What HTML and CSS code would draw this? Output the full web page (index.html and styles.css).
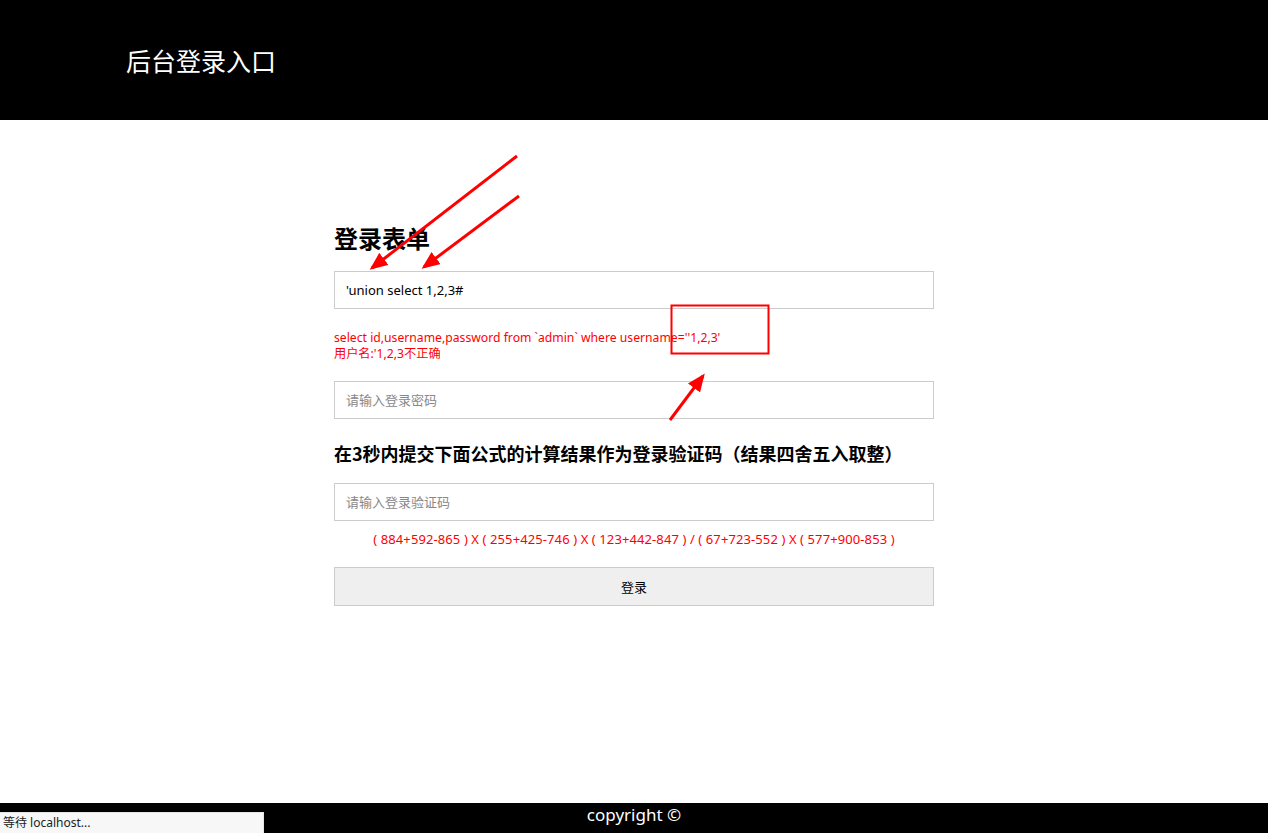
FILE: index.html
```html
<!DOCTYPE html>
<html lang="zh-CN">
<head>
<meta charset="utf-8">
<title>后台登录入口</title>
<link rel="stylesheet" href="styles.css">
</head>
<body>
<div class="page">
  <header class="top">
    <h1 class="brand">后台登录入口</h1>
  </header>
  <main class="main">
    <form class="login">
      <h2 class="form-title">登录表单</h2>
      <input class="field" type="text" value="'union select 1,2,3#">
      <div class="error">
        <div>select id,username,password from `admin` where username=''1,2,3'</div>
        <div>用户名:'1,2,3不正确</div>
      </div>
      <input class="field" type="password" placeholder="请输入登录密码">
      <h3 class="captcha-title">在3秒内提交下面公式的计算结果作为登录验证码（结果四舍五入取整）</h3>
      <input class="field" type="text" placeholder="请输入登录验证码">
      <div class="formula">( 884+592-865 ) X ( 255+425-746 ) X ( 123+442-847 ) / ( 67+723-552 ) X ( 577+900-853 )</div>
      <button class="submit" type="button">登录</button>
    </form>
  </main>
  <footer class="bottom">copyright ©</footer>
</div>
<svg class="annot" width="1268" height="833" viewBox="0 0 1268 833">
  <defs>
    <marker id="ah" markerWidth="6" markerHeight="5" refX="5" refY="2.5" orient="auto" markerUnits="strokeWidth">
      <path d="M0,0 L6,2.5 L0,5 Z" fill="#ff0000"/>
    </marker>
  </defs>
  <line x1="517" y1="156" x2="372" y2="268" stroke="#ff0000" stroke-width="3" marker-end="url(#ah)"/>
  <line x1="519" y1="196" x2="424" y2="267" stroke="#ff0000" stroke-width="3" marker-end="url(#ah)"/>
  <line x1="670" y1="420" x2="703" y2="376" stroke="#ff0000" stroke-width="3" marker-end="url(#ah)"/>
  <rect x="671.5" y="305.5" width="97" height="48" fill="none" stroke="#ff0000" stroke-width="2"/>
</svg>
<div class="status">等待 localhost...</div>
</body>
</html>
```
FILE: styles.css
```css
html, body {
  margin: 0;
  padding: 0;
}
body {
  font-family: "Noto Sans", "Noto Sans CJK SC", sans-serif;
  color: #000;
  background: #fff;
}
.page {
  min-height: 100vh;
  display: flex;
  flex-direction: column;
}
.top {
  background: #000;
  height: 120px;
  display: flex;
  align-items: center;
  padding-left: 126px;
  box-sizing: border-box;
}
.brand {
  margin: 0;
  color: #fff;
  font-weight: normal;
  font-size: 25px;
  font-family: "Noto Sans CJK SC", sans-serif;
  line-height: 1;
  padding-top: 1px;
}
.main {
  flex: 1;
}
.login {
  width: 600px;
  margin: 0 auto;
  padding-top: 101px;
  display: flex;
  flex-direction: column;
}
.form-title {
  margin: 0 0 16px;
  font-size: 24px;
  line-height: 34px;
  font-weight: bold;
  font-family: "Noto Sans CJK SC", sans-serif;
}
.field {
  height: 38px;
  box-sizing: border-box;
  border: 1px solid #ccc;
  padding: 0 11px;
  font-size: 13px;
  font-family: "Noto Sans", "Noto Sans CJK SC", sans-serif;
  color: #000;
  outline: none;
  background: #fff;
}
.field::placeholder {
  color: #888;
}
.error {
  color: #ff0000;
  font-size: 12.2px;
  line-height: 16px;
  margin: 21px 0 19px;
}
.captcha-title {
  margin: 20px 0 16px;
  font-size: 18px;
  line-height: 28px;
  font-weight: bold;
  font-family: "Noto Sans CJK SC", sans-serif;
}
.formula {
  color: #ff0000;
  font-size: 13px;
  letter-spacing: 0.1px;
  line-height: 16px;
  text-align: center;
  margin: 10px 0 20px;
}
.submit {
  height: 39px;
  border: 1px solid #ccc;
  background: #efefef;
  font-size: 13px;
  font-family: "Noto Sans CJK SC", sans-serif;
  color: #000;
}
.bottom {
  background: #000;
  color: #fff;
  height: 30px;
  line-height: 24px;
  text-align: center;
  font-size: 17px;
}
.annot {
  position: absolute;
  left: 0;
  top: 0;
  pointer-events: none;
}
.status {
  position: absolute;
  left: 0;
  bottom: 0;
  width: 260px;
  height: 20px;
  background: #f7f7f7;
  border-top: 1px solid #e4e4e4;
  border-right: 1px solid #e4e4e4;
  font-size: 12px;
  line-height: 20px;
  padding-left: 3px;
  color: #222;
}
```
